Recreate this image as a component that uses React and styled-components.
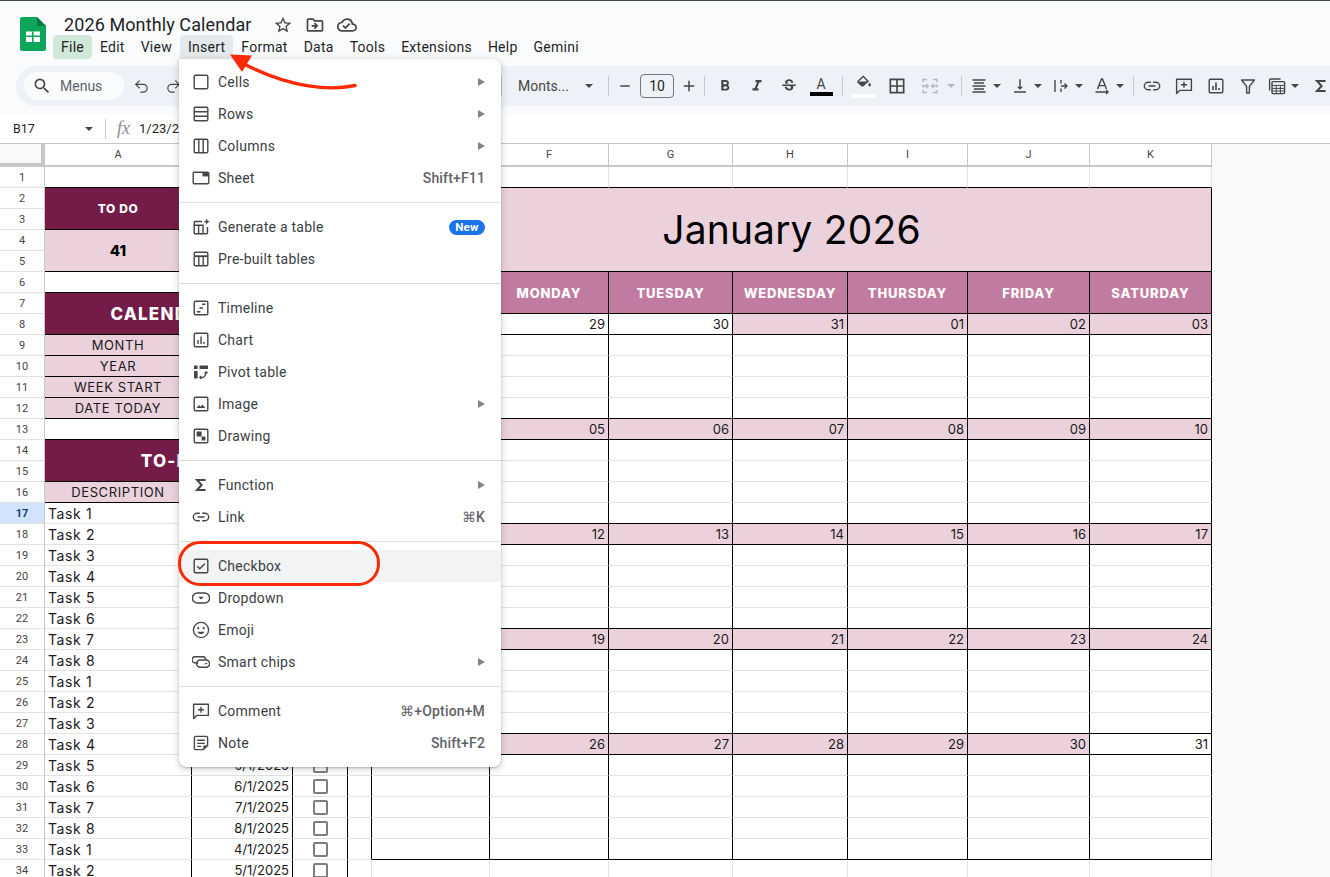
import React from "react";
import styled, { createGlobalStyle } from "styled-components";
import { Undo2, Redo2 } from "lucide-react";
import {
  MdSearch, MdStarBorder, MdOutlineDriveFileMove, MdOutlineCloudDone,
  MdFormatBold, MdFormatItalic, MdStrikethroughS, MdBorderAll, MdVerticalAlignBottom, MdAdd, MdRemove,
} from "react-icons/md";

const GlobalStyle = createGlobalStyle`
  html, body { margin: 0; padding: 0; background: #fff; }
  body { font-family: Roboto, "Liberation Sans", sans-serif; overflow: hidden; }
`;

// ---------- icons ----------
const Glyph = ({ children, size = 18, color = "currentColor" }) => (
  <svg width={size} height={size} viewBox="0 0 18 18" fill="none" stroke={color} strokeWidth="1.4" style={{ flex: "none" }}>
    {children}
  </svg>
);

const menuIcons = {
  cells: <rect x="2.2" y="2.2" width="13.6" height="13.6" rx="1.2" />,
  rows: <><rect x="2.2" y="2.2" width="13.6" height="13.6" rx="1.2" /><path d="M2.2 6.8h13.6M2.2 11.2h13.6" /></>,
  columns: <><rect x="2.2" y="2.2" width="13.6" height="13.6" rx="1.2" /><path d="M6.8 2.2v13.6M11.2 2.2v13.6" /></>,
  sheet: <><rect x="1.2" y="3.2" width="15.6" height="11.6" rx="1.2" /><rect x="10.5" y="3.2" width="6.3" height="4.2" fill="currentColor" stroke="none" /></>,
  generate: <><path d="M15.5 9v5.7a1 1 0 0 1-1 1H3.2a1 1 0 0 1-1-1V4.5a1 1 0 0 1 1-1H10M2.2 7.2h9.5M6.6 7.2v8.5M11 7.2v8.5" /><path d="M14.7 .6l.9 2.2 2.2.9-2.2.9-.9 2.2-.9-2.2-2.2-.9 2.2-.9z" fill="currentColor" stroke="none" /></>,
  prebuilt: <><rect x="2.2" y="2.2" width="13.6" height="13.6" rx="1.2" /><path d="M2.2 6.2h13.6" strokeWidth="1.8" /><path d="M6.8 6.2v9.6M11.2 6.2v9.6" /></>,
  timeline: <><rect x="2.2" y="2.2" width="13.6" height="13.6" rx="1.2" /><path d="M4.8 12.8h3.6M7.4 9h3.6M10 5.3h3.4" /></>,
  chart: <><rect x="2.2" y="2.2" width="13.6" height="13.6" rx="1.2" /><path d="M6 9v4M9 5.5v7.5M12 11v2" /></>,
  pivot: <><path d="M2 2.5h3.6v3.6H2zM2 8h3.6v7.5H2zM7.5 2.5H16v3.6H7.5z" fill="currentColor" stroke="none" /><path d="M8 14.5c3.5.6 6.3-1.4 6-5.5M12.6 10.4l1.4-1.6 1.6 1.5M9.4 13l-1.6 1.5 1.5 1.5" strokeWidth="1.2" /></>,
  image: <><rect x="2.2" y="2.2" width="13.6" height="13.6" rx="1.2" /><path d="M4.6 13l2.4-3 1.7 1.8 1.6-2.3 3.1 3.5z" fill="currentColor" stroke="none" /></>,
  drawing: <><rect x="2.2" y="2.2" width="13.6" height="13.6" rx="1.2" /><path d="M4.6 4.6h5v5h-5zM9.6 9.6h3.8v3.8H9.6z" fill="currentColor" stroke="none" /></>,
  sigma: <path d="M13.6 4H5l4.6 5L5 14h8.6" strokeWidth="2" />,
  link: <path d="M7.8 5.3H5a3.7 3.7 0 0 0 0 7.4h2.8M10.2 5.3H13a3.7 3.7 0 0 1 0 7.4h-2.8M5.6 9h6.8" />,
  checkbox: <><rect x="2.2" y="2.2" width="13.6" height="13.6" rx="1.2" /><path d="M5.2 9.2l2.6 2.6 5-5" /></>,
  dropdown: <><rect x=".4" y="4" width="17.2" height="10" rx="5" /><path d="M6.3 7.8h5.4L9 10.6z" fill="currentColor" stroke="none" /></>,
  emoji: <><circle cx="9" cy="9" r="7.6" /><circle cx="6.3" cy="7.2" r="1.1" fill="currentColor" stroke="none" /><circle cx="11.7" cy="7.2" r="1.1" fill="currentColor" stroke="none" /><path d="M5.4 10.8h7.2a3.9 3.9 0 0 1-7.2 0z" fill="currentColor" stroke="none" /></>,
  chips: <><path d="M6 10.2H3a2.6 2.6 0 0 1 0-6.2h7.8a2.6 2.6 0 0 1 2.5 2.6" transform="translate(.2 -.2)" /><rect x="4.6" y="7" width="13" height="7.2" rx="3.6" /><path d="M12.4 10h3.2l-1.6 1.7z" fill="currentColor" stroke="none" /></>,
  comment: <><path d="M1.6 2.2h14.8v11.2H4.6L1.6 16.4z" strokeLinejoin="round" /><path d="M9 4.8v6M6 7.8h6" /></>,
  note: <><path d="M2.4 3.4a1 1 0 0 1 1-1h11.2a1 1 0 0 1 1 1v8l-4.2 4.2H3.4a1 1 0 0 1-1-1z" /><path d="M5.2 6.3h7.6M5.2 9.4h7.6M5.2 12.4h3.8" /><path d="M15.6 11.4h-4.2v4.2z" fill="currentColor" stroke="none" /></>,
};

const toolIcons = {
  fill: <><path d="M7.6 .8l5.4 5.4-5 4.4a1 1 0 0 1-1.3 0L3.2 7.4a1 1 0 0 1 0-1.4L7.6 2" /><path d="M3 6.4h9.6L8 10.4a1 1 0 0 1-1.3 0z" fill="currentColor" stroke="none" /><path d="M14.6 7.6c.8 1.2 1.3 1.9 1.3 2.5a1.3 1.3 0 0 1-2.6 0c0-.6.5-1.3 1.3-2.5z" fill="currentColor" stroke="none" /></>,
  merge: <><path d="M2 5V2.5h4M12 2.5h4V5M2 13v2.5h4M12 15.5h4V13M2 7.5v3M16 7.5v3" /><path d="M2 9h5M5.3 7l2 2-2 2M16 9h-5M12.7 7l-2 2 2 2" /></>,
  align: <path d="M2.5 3h13M4 6h10M2.5 9h13M4 12h10M2.5 15h13" />,
  wrap: <path d="M3 3v12M9 3v3.5M9 11.5V15M9 9h6M12.5 6.6L15 9l-2.5 2.4" />,
  rotate: <><path d="M4.5 12L8.5 2h1l4 10M6 8.6h6" /><path d="M2.5 15h12.5M13 13l2 2-2 2" /></>,
  link: menuIcons.link,
  comment: menuIcons.comment,
  chart: <><rect x="2.2" y="2.2" width="13.6" height="13.6" rx="1.2" /><path d="M6 9v4M9 5.5v7.5M12 11v2" strokeWidth="1.6" /></>,
  filter: <path d="M2.6 3h12.8L10.4 9.4V16H7.6V9.4z" strokeLinejoin="round" />,
  calc: <><path d="M1.6 13.5V3a1 1 0 0 1 1-1h10" /><rect x="4" y="4.6" width="12.6" height="12" rx="1" /><path d="M4 8.4h12.6M4 11.4h12.6M4 14h12.6M8.2 8.4v8.2M12.4 8.4v8.2" strokeWidth="1" /></>,
  sigma: menuIcons.sigma,
};

const SheetsLogo = () => (
  <svg width="26" height="34" viewBox="0 0 26 34">
    <path d="M2 0h15l9 9v23a2 2 0 0 1-2 2H2a2 2 0 0 1-2-2V2a2 2 0 0 1 2-2z" fill="#0ba65a" />
    <path d="M17 0l9 9h-7a2 2 0 0 1-2-2z" fill="#067a3e" />
    <path d="M6 14.5h14v10.5H6z" fill="#fff" />
    <path d="M6 19.2h14M12.8 14.5v10.5" stroke="#0ba65a" strokeWidth="1.6" />
  </svg>
);

// ---------- chrome ----------
const Page = styled.div`
  position: relative;
  width: 1330px;
  height: 877px;
  overflow: hidden;
  display: flex;
  flex-direction: column;
`;
const Header = styled.header`
  height: 65px;
  flex: none;
  padding-left: 20px;
  display: flex;
  background: #f9fbfd;
  border-top: 1px solid #3f4a4a;
`;
const LogoWrap = styled.div`
  margin-top: 16px;
  height: 34px;
`;
const HeadColumn = styled.div`
  margin-left: 7px;
  padding-top: 13px;
`;
const TitleRow = styled.div`
  height: 21px;
  padding-left: 11px;
  display: flex;
  align-items: center;
`;
const DocTitle = styled.div`
  font-family: Roboto, sans-serif;
  font-size: 18px;
  letter-spacing: 0.1px;
  color: #1f1f1f;
  width: 187px;
  white-space: nowrap;
`;
const TitleIcon = styled.div`
  width: 32px;
  display: flex;
  justify-content: center;
  color: #444746;
  margin-left: ${p => p.$first ? "16px" : "0"};
`;
const MenuBar = styled.nav`
  height: 24px;
  display: flex;
`;
const MenuItem = styled.div`
  padding: 0 8px;
  font-size: 14px;
  letter-spacing: 0.25px;
  line-height: 24px;
  color: #1f1f1f;
  border-radius: ${p => p.$open ? "4px 4px 0 0" : "4px"};
  background: ${p => p.$open ? "#e6e9ec" : p.$active ? "#cfe8d7" : "transparent"};
`;
const ToolStrip = styled.div`
  height: 48px;
  flex: none;
  background: #f9fbfd;
  padding-left: 16px;
`;
const Toolbar = styled.div`
  height: 40px;
  display: flex;
  align-items: center;
  background: #eef2f8;
  border-radius: 20px 0 0 20px;
  padding-left: 8px;
  overflow: hidden;
  color: #444746;
`;
const SearchPill = styled.div`
  width: 100px;
  height: 28px;
  flex: none;
  box-sizing: border-box;
  padding-left: 8px;
  border-radius: 14px;
  background: #f9fbfd;
  display: flex;
  align-items: center;
  gap: 8px;
  font-size: 14px;
  color: #5f6368;
`;
const Tool = styled.div`
  width: ${p => p.$w || 32}px;
  height: 24px;
  flex: none;
  display: flex;
  align-items: center;
  justify-content: center;
`;
const CaretTool = styled.div`
  width: ${p => p.$w || 41}px;
  height: 24px;
  flex: none;
  box-sizing: border-box;
  padding-left: ${p => p.$pad || 4}px;
  display: flex;
  align-items: center;
  gap: ${p => p.$gap || 5}px;
  color: ${p => p.$muted ? "#b4b8bb" : "inherit"};
`;
const Caret = styled.span`
  flex: none;
  width: 0;
  height: 0;
  border-left: 4px solid transparent;
  border-right: 4px solid transparent;
  border-top: 4px solid ${p => p.$muted ? "#b4b8bb" : "#444746"};
`;
const Rule = styled.div`
  width: 1px;
  height: 20px;
  flex: none;
  background: #c7c9cc;
  margin: 0 ${p => p.$m ?? 4}px 0 ${p => p.$l ?? 4}px;
`;
const FontPick = styled.div`
  width: 106px;
  flex: none;
  box-sizing: border-box;
  padding: 0 15px 0 16px;
  display: flex;
  justify-content: space-between;
  align-items: center;
  font-size: 14px;
  color: #444746;
`;
const SizeBox = styled.div`
  width: 34px;
  height: 24px;
  flex: none;
  box-sizing: border-box;
  border: 1px solid #747775;
  border-radius: 4px;
  text-align: center;
  font-size: 14px;
  line-height: 22px;
  color: #1f1f1f;
`;
const Spacer = styled.div`
  width: ${p => p.$w}px;
  flex: none;
`;
const ColorTool = styled.div`
  width: ${p => p.$w || 32}px;
  flex: none;
  display: flex;
  flex-direction: column;
  align-items: center;
  gap: 1px;
`;
const LetterA = styled.span`
  font-size: 14px;
  line-height: 14px;
  color: #444746;
`;
const ColorBar = styled.span`
  width: 23px;
  height: 4px;
  background: ${p => p.$color};
`;
const FormulaBar = styled.div`
  height: 29px;
  flex: none;
  background: #fff;
  display: flex;
  align-items: center;
  font-size: 13px;
  color: #1f1f1f;
`;
const NameBox = styled.div`
  width: 105px;
  box-sizing: border-box;
  padding: 0 12px 0 13px;
  display: flex;
  justify-content: space-between;
  align-items: center;
  font-size: 12.5px;
`;
const Fx = styled.i`
  margin: 0 9px 0 11px;
  font-family: "Liberation Serif", serif;
  font-size: 18px;
  color: #8a8d90;
`;

// ---------- sheet ----------
const Sheet = styled.div`
  flex: none;
  display: grid;
  grid-template-columns: 45px 147px 101px 55px 24px 118px 119px 124px 115px 120px 122px 122px 1fr;
  grid-template-rows: 23px repeat(34, 21px);
  background: #f8f9f8;
  border-top: 1px solid #c7c7c7;
`;
const Corner = styled.div`
  box-sizing: border-box;
  background: #f8f9fa;
  border-right: 4px solid #c7c7c7;
  border-bottom: 4px solid #c7c7c7;
`;
const ColHead = styled.div`
  box-sizing: border-box;
  background: #fff;
  border-right: 1px solid #c7c7c7;
  border-bottom: 2px solid #c7c7c7;
  display: flex;
  align-items: center;
  justify-content: center;
  font-size: 11px;
  color: #444;
`;
const RowHead = styled.div`
  grid-column: 1;
  grid-row: ${p => p.$r + 1};
  box-sizing: border-box;
  background: ${p => p.$on ? "#d3e3fd" : "#fff"};
  border-right: 1px solid #c7c7c7;
  border-bottom: 1px solid #e1e1e1;
  display: flex;
  align-items: center;
  justify-content: center;
  font-size: 11px;
  font-weight: ${p => p.$on ? 700 : 400};
  color: ${p => p.$on ? "#0b3a7e" : "#444"};
`;
const Cell = styled.div`
  grid-row: ${p => p.$r + 1} / span ${p => p.$rs || 1};
  grid-column: ${p => p.$c + 1} / span ${p => p.$cs || 1};
  box-sizing: border-box;
  min-width: 0;
  padding: 0 3px;
  display: flex;
  align-items: center;
  justify-content: ${p => p.$align || "flex-start"};
  background: ${p => p.$bg || "#fff"};
  color: ${p => p.$color || "#1a1a1a"};
  font-family: Inter, "Liberation Sans", sans-serif;
  font-size: ${p => p.$size || 13}px;
  font-weight: ${p => p.$weight || 400};
  letter-spacing: ${p => p.$track || 0}px;
  white-space: nowrap;
  overflow: hidden;
  border-right: 1px solid ${p => p.$rb ? "#000" : "#e2e3e3"};
  border-bottom: 1px solid ${p => p.$bb ? "#000" : "#e2e3e3"};
`;
const CheckMark = styled.span`
  width: 15px;
  height: 15px;
  box-sizing: border-box;
  border: 2px solid #7d7d7d;
  border-radius: 2px;
`;

// ---------- overlays ----------
const Dropdown = styled.div`
  position: absolute;
  left: 179px;
  top: 59px;
  width: 322px;
  box-sizing: border-box;
  padding: 7px 0 8px;
  background: #fff;
  border-radius: 0 8px 8px 8px;
  box-shadow: 0 2px 6px 2px rgba(60, 64, 67, .15), 0 1px 2px rgba(60, 64, 67, .3);
`;
const Item = styled.div`
  height: 32px;
  padding: 0 16px 0 13px;
  display: flex;
  align-items: center;
  font-size: 14px;
  letter-spacing: 0.25px;
  color: #3c4043;
  background: ${p => p.$hover ? "#f1f3f4" : "transparent"};
`;
const ItemIcon = styled.span`
  width: 18px;
  height: 18px;
  margin-right: 8px;
  color: #444746;
`;
const ItemLabel = styled.span`
  flex: 1;
`;
const Shortcut = styled.span`
  color: #5f6368;
  font-weight: 500;
  letter-spacing: 0.15px;
`;
const SubArrow = styled.span`
  width: 0;
  height: 0;
  border-top: 4.5px solid transparent;
  border-bottom: 4.5px solid transparent;
  border-left: 7px solid #80868b;
`;
const NewBadge = styled.span`
  width: 36px;
  height: 15px;
  border-radius: 8px;
  background: #1a73e8;
  color: #fff;
  font-size: 11.5px;
  font-weight: 700;
  line-height: 15px;
  text-align: center;
`;
const Divider = styled.div`
  height: 1px;
  margin: 8px 0;
  background: #dadce0;
`;
const Ring = styled.div`
  position: absolute;
  left: 178px;
  top: 541px;
  width: 202px;
  height: 45px;
  box-sizing: border-box;
  border: 3px solid #fb2a05;
  border-radius: 22px;
`;
const ArrowMark = styled.svg`
  position: absolute;
  left: 220px;
  top: 45px;
`;

// ---------- data ----------
const COL_NAMES = ["A", "B", "C", "D", "E", "F", "G", "H", "I", "J", "K"];

const menuGroups = [
  [
    { icon: "cells", label: "Cells", sub: true },
    { icon: "rows", label: "Rows", sub: true },
    { icon: "columns", label: "Columns", sub: true },
    { icon: "sheet", label: "Sheet", key: "Shift+F11" },
  ],
  [
    { icon: "generate", label: "Generate a table", badge: true },
    { icon: "prebuilt", label: "Pre-built tables" },
  ],
  [
    { icon: "timeline", label: "Timeline" },
    { icon: "chart", label: "Chart" },
    { icon: "pivot", label: "Pivot table" },
    { icon: "image", label: "Image", sub: true },
    { icon: "drawing", label: "Drawing" },
  ],
  [
    { icon: "sigma", label: "Function", sub: true },
    { icon: "link", label: "Link", key: "⌘K" },
  ],
  [
    { icon: "checkbox", label: "Checkbox", hover: true },
    { icon: "dropdown", label: "Dropdown" },
    { icon: "emoji", label: "Emoji" },
    { icon: "chips", label: "Smart chips", sub: true },
  ],
  [
    { icon: "comment", label: "Comment", key: "⌘+Option+M" },
    { icon: "note", label: "Note", key: "Shift+F2" },
  ],
];

const DARK = "#741b47";
const PINK = "#ead1dc";
const MAUVE = "#c27ba0";

const weeks = [
  { row: 8, days: ["28", "29", "30", "31", "01", "02", "03"], white: [1, 2] },
  { row: 13, days: ["04", "05", "06", "07", "08", "09", "10"], white: [] },
  { row: 18, days: ["11", "12", "13", "14", "15", "16", "17"], white: [] },
  { row: 23, days: ["18", "19", "20", "21", "22", "23", "24"], white: [] },
  { row: 28, days: ["25", "26", "27", "28", "29", "30", "31"], white: [6] },
];
const weekdays = ["SUNDAY", "MONDAY", "TUESDAY", "WEDNESDAY", "THURSDAY", "FRIDAY", "SATURDAY"];
const labels = { 9: "MONTH", 10: "YEAR", 11: "WEEK START", 12: "DATE TODAY" };

const leftBlackBottom = [1, 3, 5, 6, 8, 9, 10, 11, 12, 13, 15, 16];
const calBlackBottom = [1, 5, 7, 8, 12, 13, 17, 18, 22, 23, 27, 28, 33];

// merged blocks and single filled cells
function buildCells() {
  const out = [];
  const band = { $bg: DARK, $color: "#fff", $align: "center", $rb: true, $bb: true };
  const label = { $bg: PINK, $align: "center", $rb: true, $bb: true, $track: 0.6 };
  const taken = new Set();
  const add = (r, c, props, text) => {
    const rs = props.$rs || 1;
    const cs = props.$cs || 1;
    for (let i = r; i < r + rs; i++) for (let j = c; j < c + cs; j++) taken.add(i + "-" + j);
    out.push(<Cell key={r + "-" + c} $r={r} $c={c} {...props}>{text}</Cell>);
  };

  add(2, 1, { ...band, $rs: 2, $size: 12, $weight: 800, $track: 0.6 }, "TO DO");
  add(2, 2, { ...band, $rs: 2, $cs: 2 });
  add(4, 1, { $bg: PINK, $align: "center", $rs: 2, $size: 15, $weight: 800, $color: "#000", $rb: true, $bb: true }, "41");
  add(4, 2, { $bg: PINK, $rs: 2, $cs: 2, $rb: true, $bb: true });
  add(7, 1, { ...band, $rs: 2, $cs: 3, $size: 17, $weight: 800, $track: 1.2 }, "CALENDAR SETUP");
  add(14, 1, { ...band, $rs: 2, $cs: 3, $size: 17, $weight: 800, $track: 1.2 }, "TO-DO LIST");

  Object.entries(labels).forEach(([r, text]) => {
    add(+r, 1, label, text);
    add(+r, 2, { $bg: PINK, $cs: 2, $rb: true, $bb: true });
  });
  add(16, 1, label, "DESCRIPTION");
  add(16, 2, { $bg: PINK, $cs: 2, $rb: true, $bb: true });

  // to-do list rows
  for (let r = 17; r <= 34; r++) {
    const n = ((r - 17) % 8) + 1;
    const month = r <= 24 ? r - 16 : r <= 32 ? r - 24 : r - 29;
    add(r, 1, { $rb: true, $size: 14, $track: 0.6 }, "Task " + n);
    add(r, 2, { $rb: true, $align: "flex-end" }, month + "/1/2025");
    add(r, 3, { $rb: true, $align: "center" }, <CheckMark />);
  }

  // calendar
  add(2, 5, { $bg: PINK, $rs: 4, $cs: 7, $size: 39, $track: 0.15, $align: "center", $color: "#000", $rb: true, $bb: true }, "January 2026");
  weekdays.forEach((d, i) => add(6, 5 + i, { ...band, $bg: MAUVE, $rs: 2, $weight: 800, $size: 13, $track: 0.85 }, d));
  weeks.forEach(w => w.days.forEach((d, i) => {
    add(w.row, 5 + i, {
      $bg: w.white.includes(i) ? "#fff" : PINK,
      $align: "flex-end",
      $rb: true,
      $bb: true,
    }, d);
  }));

  // plain grid cells for whatever is left
  for (let r = 1; r <= 34; r++) {
    for (let c = 1; c <= 11; c++) {
      if (taken.has(r + "-" + c)) continue;
      const inCal = c >= 5 && r >= 2 && r <= 33;
      const calFrame = c === 4 && r >= 2 && r <= 33;
      const leftFrame = c === 3 && r >= 2 && r <= 16;
      const bb = (c <= 3 && leftBlackBottom.includes(r)) || (c >= 5 && calBlackBottom.includes(r));
      out.push(<Cell key={r + "-" + c} $r={r} $c={c} $rb={inCal || calFrame || leftFrame} $bb={bb} />);
    }
  }
  return out;
}

function InsertMenu() {
  return (
    <Dropdown>
      {menuGroups.map((group, g) => (
        <React.Fragment key={g}>
          {g > 0 && <Divider />}
          {group.map(it => (
            <Item key={it.label} $hover={it.hover}>
              <ItemIcon><Glyph>{menuIcons[it.icon]}</Glyph></ItemIcon>
              <ItemLabel>{it.label}</ItemLabel>
              {it.key && <Shortcut>{it.key}</Shortcut>}
              {it.sub && <SubArrow />}
              {it.badge && <NewBadge>New</NewBadge>}
            </Item>
          ))}
        </React.Fragment>
      ))}
    </Dropdown>
  );
}

const Icon = ({ name, color }) => <Glyph color={color}>{toolIcons[name]}</Glyph>;

export default function App() {
  return (
    <Page>
      <GlobalStyle />
      <Header>
        <LogoWrap><SheetsLogo /></LogoWrap>
        <HeadColumn>
          <TitleRow>
            <DocTitle>2026 Monthly Calendar</DocTitle>
            <TitleIcon $first><MdStarBorder size={20} /></TitleIcon>
            <TitleIcon><MdOutlineDriveFileMove size={20} /></TitleIcon>
            <TitleIcon><MdOutlineCloudDone size={20} /></TitleIcon>
          </TitleRow>
          <MenuBar>
            <MenuItem $active>File</MenuItem>
            <MenuItem>Edit</MenuItem>
            <MenuItem>View</MenuItem>
            <MenuItem $open>Insert</MenuItem>
            <MenuItem>Format</MenuItem>
            <MenuItem>Data</MenuItem>
            <MenuItem>Tools</MenuItem>
            <MenuItem>Extensions</MenuItem>
            <MenuItem>Help</MenuItem>
            <MenuItem>Gemini</MenuItem>
          </MenuBar>
        </HeadColumn>
      </Header>

      <ToolStrip>
        <Toolbar>
          <SearchPill><MdSearch size={20} color="#444746" />Menus</SearchPill>
          <Spacer $w={1} />
          <Tool><Undo2 size={17} strokeWidth={1.7} /></Tool>
          <Tool><Redo2 size={17} strokeWidth={1.7} /></Tool>
          <Spacer $w={312} />
          <Rule $l={0} $m={0} />
          <FontPick>Monts...<Caret /></FontPick>
          <Rule $l={0} $m={0} />
          <Tool $w={31}><MdRemove size={16} /></Tool>
          <SizeBox>10</SizeBox>
          <Tool $w={30}><MdAdd size={18} /></Tool>
          <Rule $l={0} />
          <Tool><MdFormatBold size={18} /></Tool>
          <Tool><MdFormatItalic size={18} /></Tool>
          <Tool><MdStrikethroughS size={18} /></Tool>
          <ColorTool><LetterA>A</LetterA><ColorBar $color="#000" /></ColorTool>
          <Rule $l={5} />
          <ColorTool $w={33}><Icon name="fill" /><ColorBar $color="#fff" /></ColorTool>
          <Tool $w={33}><MdBorderAll size={20} /></Tool>
          <CaretTool $muted $w={44} $pad={8} $gap={8}><Icon name="merge" color="#b4b8bb" /><Caret $muted /></CaretTool>
          <Rule />
          <CaretTool><Icon name="align" /><Caret /></CaretTool>
          <CaretTool><MdVerticalAlignBottom size={18} /><Caret /></CaretTool>
          <CaretTool><Icon name="wrap" /><Caret /></CaretTool>
          <CaretTool><Icon name="rotate" /><Caret /></CaretTool>
          <Rule $l={3} $m={2} />
          <Tool><Icon name="link" /></Tool>
          <Tool><Icon name="comment" /></Tool>
          <Tool><Icon name="chart" /></Tool>
          <Tool><Icon name="filter" /></Tool>
          <CaretTool><Icon name="calc" /><Caret /></CaretTool>
          <Tool><Icon name="sigma" /></Tool>
        </Toolbar>
      </ToolStrip>

      <FormulaBar>
        <NameBox>B17<Caret /></NameBox>
        <Rule $l={0} $m={0} />
        <Fx>fx</Fx>
        <span>1/23/2026</span>
      </FormulaBar>

      <Sheet>
        <Corner />
        {COL_NAMES.map(n => <ColHead key={n}>{n}</ColHead>)}
        {Array.from({ length: 34 }, (_, i) => (
          <RowHead key={i} $r={i + 1} $on={i === 16}>{i + 1}</RowHead>
        ))}
        {buildCells()}
      </Sheet>

      <InsertMenu />
      <Ring />
      <ArrowMark width="140" height="50" viewBox="220 45 140 50" fill="none">
        <path d="M355 85.5C330 91 292 88 246 65" stroke="#fb2a05" strokeWidth="3.4" strokeLinecap="round" />
        <path d="M230 54.5L252 55.5L242 72z" fill="#fb2a05" />
      </ArrowMark>
    </Page>
  );
}
